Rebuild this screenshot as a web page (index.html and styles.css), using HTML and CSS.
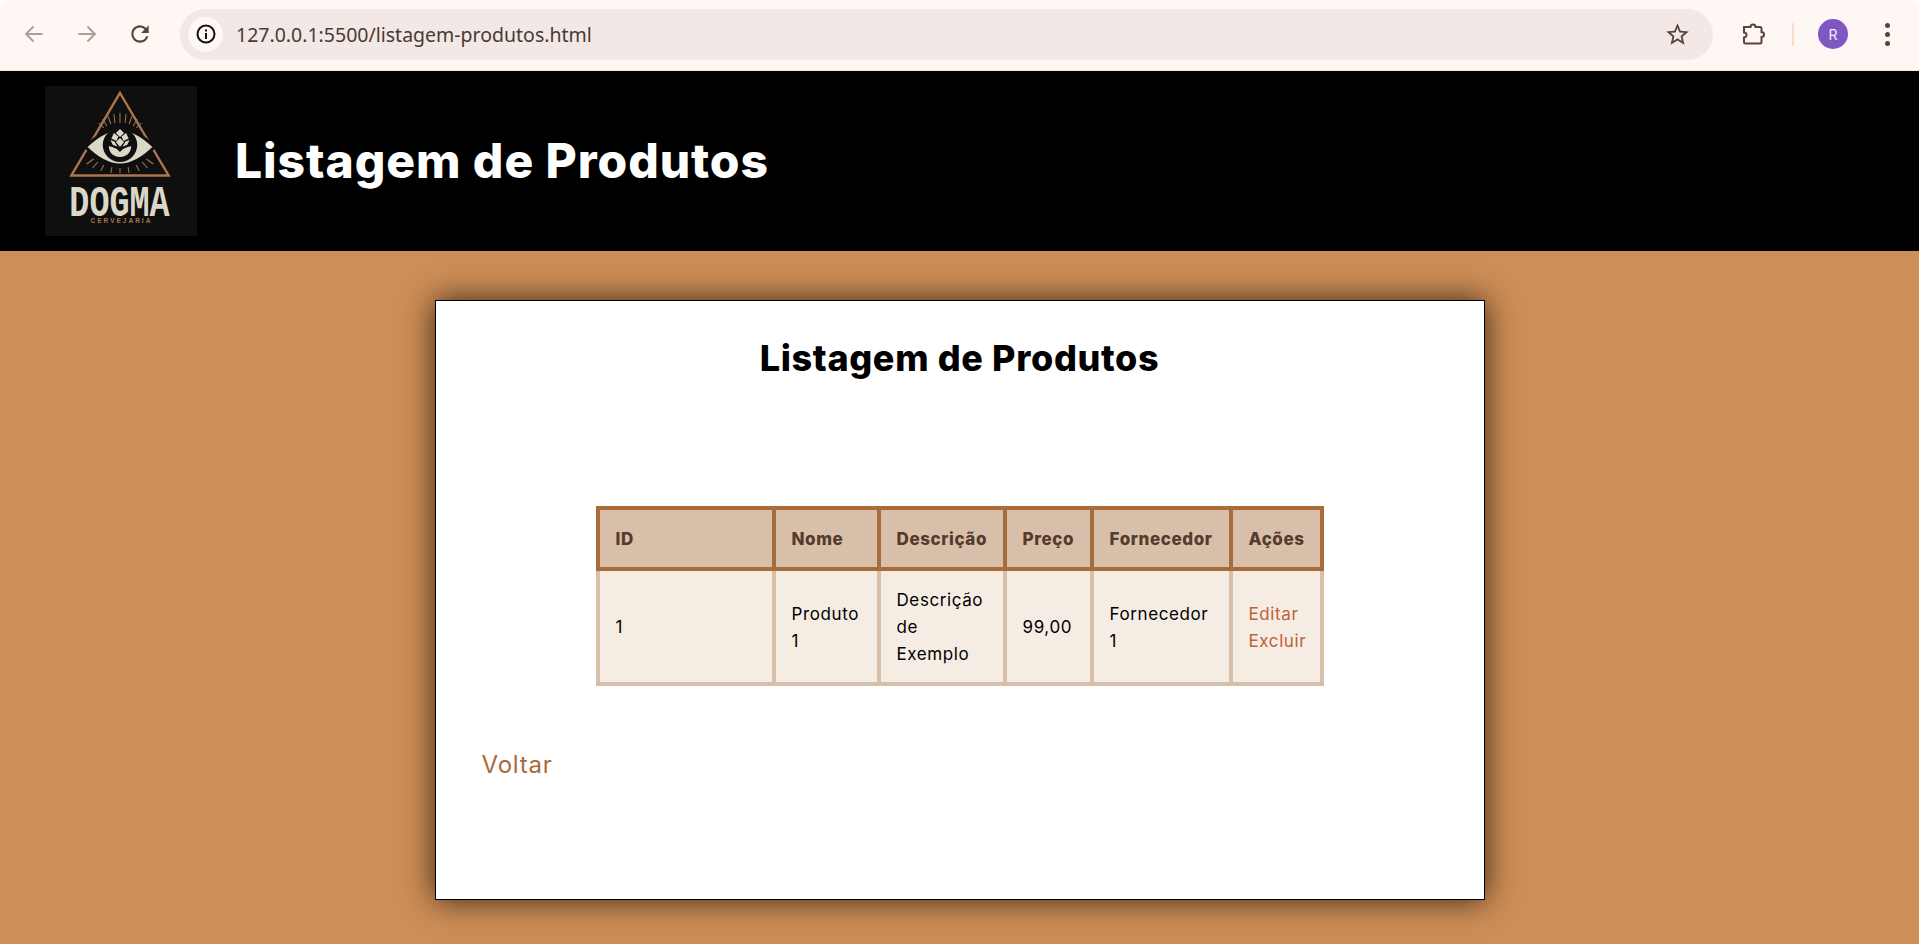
FILE: index.html
```html
<!DOCTYPE html>
<html lang="pt-BR">
<head>
  <meta charset="UTF-8" />
  <meta name="viewport" content="width=device-width, initial-scale=1.0"/>
  <title>Listagem de Produtos</title>
  <link rel="stylesheet" href="styles.css">
</head>
<body>
  <!-- browser bar -->
  <div class="toolbar">
    <div class="nav-btn">
      <svg class="icon-arrow" width="20" height="20" viewBox="0 0 20 20"><path d="M18.5 10H2M9.5 2.5L2 10l7.5 7.5"/></svg>
    </div>
    <div class="nav-btn">
      <svg class="icon-arrow" width="20" height="20" viewBox="0 0 20 20"><path d="M1.5 10H18M10.500 2.500L18 10l-7.500 7.500"/></svg>
    </div>
    <div class="nav-btn">
      <svg class="icon-solid" width="26" height="26" viewBox="0 0 24 24"><path d="M17.650 6.350A7.958 7.958 0 0 0 12 4c-4.420 0-7.990 3.580-7.990 8s3.570 8 7.990 8c3.730 0 6.840-2.550 7.730-6h-2.080A5.990 5.990 0 0 1 12 18c-3.310 0-6-2.690-6-6s2.690-6 6-6c1.660 0 3.140.690 4.220 1.780L13 11h7V4l-2.350 2.350z"/></svg>
    </div>
    <div class="omnibox">
      <span class="site-info">
        <svg width="22" height="22" viewBox="0 0 22 22"><circle cx="11" cy="11" r="8.500" fill="none" stroke="#111" stroke-width="2"/><rect x="10" y="10" width="2" height="6" fill="#111"/><rect x="10" y="6.500" width="2" height="2" fill="#111"/></svg>
      </span>
      <span class="url">127.0.0.1:5500/listagem-produtos.html</span>
      <svg class="icon-solid star" width="27" height="27" viewBox="0 0 24 24"><path d="M22 9.240l-7.190-.620L12 2 9.190 8.630 2 9.240l5.460 4.730L5.820 21 12 17.270 18.180 21l-1.630-7.030L22 9.240zM12 15.400l-3.760 2.270 1-4.280-3.320-2.880 4.380-.380L12 6.100l1.710 4.040 4.380.380-3.320 2.880 1 4.280L12 15.400z"/></svg>
    </div>
    <svg class="puzzle" width="24" height="24" viewBox="0 0 24 24"><path d="M3 5H9.500a2.500 2.500 0 0 1 5 0H19a1.500 1.500 0 0 1 1.500 1.500V10a2.500 2.500 0 0 1 0 5v5a1.500 1.500 0 0 1-1.500 1.500H4.500A1.500 1.500 0 0 1 3 20v-4.500a2.500 2.500 0 0 0 0-5z"/></svg>
    <span class="separator"></span>
    <span class="avatar">R</span>
    <span class="menu-dots"><i></i><i></i><i></i></span>
  </div>

  <header class="site-header">
    <svg class="logo" width="152" height="150" viewBox="0 0 150 150" preserveAspectRatio="none">
      <rect width="150" height="150" fill="#0f0f0f"/>
      <path d="M74 7L122 89.500H26z" fill="none" stroke="#a8774f" stroke-width="2.400"/>
      <!-- rays -->
      <g stroke="#a8774f" stroke-width="1">
        <path d="M74 27v10M68 28l1 9M80 28l-1 9M62 30l3 8M86 30l-3 8M57 33l4 7M91 33l-4 7M53 37l5 5M95 37l-5 5"/>
        <path d="M74 82v5M66 81l-1 6M82 81l1 6M58 79l-3 6M90 79l3 6M52 76l-5 6M96 76l5 6M48 73l-7 5M100 73l7 5"/>
      </g>
      <path d="M40 61C52 49 62 43 74 43S96 49 108 61C96 73 86 79 74 79S52 73 40 61z" fill="#dcd8c8" stroke="#0f0f0f" stroke-width="3"/>
      <circle cx="74" cy="59" r="17" fill="#0f0f0f"/>
      <g fill="#dcd8c8">
        <path d="M74 43l4 4-4 4-4-4z"/>
        <path d="M68 47l4.500 3.500-2 4.500-5-2.500zM80 47l-4.500 3.500 2 4.500 5-2.500z"/>
        <path d="M74 52l4 4-4 5-4-5z"/>
        <path d="M64.500 54l4 1.500 3 5-4.500-1.500zM83.500 54l-4 1.500-3 5 4.500-1.500z"/>
        <path d="M63 60c3 1 8 2 11 6 3-4 8-5 11-6 0 7-5 11-11 11s-11-4-11-11z"/>
      </g>
      <text class="logo-name" x="24" y="130" textLength="99" lengthAdjust="spacingAndGlyphs">DOGMA</text>
      <text class="logo-sub" x="45" y="137" textLength="59" lengthAdjust="spacing">CERVEJARIA</text>
    </svg>
    <h1>Listagem de Produtos</h1>
  </header>

  <main class="content">
    <section class="card">
      <h2>Listagem de Produtos</h2>
      <table class="products">
        <thead>
          <tr>
            <th class="col-id">ID</th>
            <th class="col-name">Nome</th>
            <th class="col-desc">Descrição</th>
            <th class="col-price">Preço</th>
            <th class="col-supplier">Fornecedor</th>
            <th class="col-actions">Ações</th>
          </tr>
        </thead>
        <tbody>
          <tr>
            <td>1</td>
            <td>Produto 1</td>
            <td>Descrição de Exemplo</td>
            <td>99,00</td>
            <td>Fornecedor 1</td>
            <td>
              <a href="#">Editar</a>
              <a href="#">Excluir</a>
            </td>
          </tr>
        </tbody>
      </table>
      <a class="back-link" href="#">Voltar</a>
    </section>
  </main>
</body>
</html>
```

FILE: styles.css
```css
* { box-sizing: border-box; }
html, body { height: 100%; }
body {
  margin: 0;
  display: flex;
  flex-direction: column;
  overflow: hidden;
  background: #fff;
  font-family: "Inter", "Noto Sans", sans-serif;
  font-size: 17px;
  line-height: 27px;
  color: #000;
}

/* browser bar */
.toolbar {
  height: 71px;
  flex: none;
  display: flex;
  align-items: center;
  padding: 0 0 2px 7px;
  background: #fff7f3;
  border-bottom: 1px solid #fbe3d6;
  border-radius: 10px 10px 0 0;
}
.nav-btn {
  width: 53px;
  height: 40px;
  display: flex;
  align-items: center;
  justify-content: center;
}
.icon-arrow { fill: none; stroke: #ab9d97; stroke-width: 1.8; }
.icon-solid { fill: #5a4337; }
.omnibox {
  width: 1533px;
  height: 51px;
  margin-left: 14px;
  padding: 0 22px 0 8px;
  display: flex;
  align-items: center;
  background: #f2e8e5;
  border-radius: 26px;
}
.site-info {
  width: 35px;
  height: 35px;
  display: flex;
  align-items: center;
  justify-content: center;
  background: #fff7f3;
  border-radius: 50%;
}
.url {
  margin-left: 13px;
  padding-top: 1px;
  flex: 1;
  font-family: "Noto Sans", sans-serif;
  font-size: 19.5px;
  color: #4a3a33;
}
.puzzle { margin-left: 28px; fill: none; stroke: #5a4337; stroke-width: 2; }
.separator {
  width: 2px;
  height: 23px;
  margin-left: 27px;
  background: #fbdcc8;
}
.avatar {
  width: 30px;
  height: 30px;
  margin-left: 24px;
  display: flex;
  align-items: center;
  justify-content: center;
  border-radius: 50%;
  background: #7e57c2;
  color: #f3edfa;
  font-size: 14px;
}
.menu-dots {
  margin-left: 37px;
  display: flex;
  flex-direction: column;
  gap: 4px;
}
.menu-dots i {
  width: 5px;
  height: 5px;
  border-radius: 50%;
  background: #5a4337;
}

/* site header */
.site-header {
  height: 180px;
  flex: none;
  display: flex;
  align-items: center;
  gap: 38px;
  padding-left: 45px;
  background: #000;
}
.site-header h1 {
  margin: 0 0 1px;
  font-size: 48px;
  font-weight: 800;
  letter-spacing: 0.92px;
  line-height: 60px;
  color: #fff;
}
.logo { flex: none; overflow: visible; }
.logo-name {
  font-family: "Liberation Mono", monospace;
  font-weight: 700;
  font-size: 44px;
  fill: #dcd8c8;
}
.logo-sub {
  font-family: "Liberation Sans", sans-serif;
  font-weight: 700;
  font-size: 6.5px;
  fill: #a8774f;
}

/* page */
.content {
  flex: 1;
  padding-top: 49px;
  background: #ce8e56;
}
.card {
  width: 1050px;
  height: 600px;
  margin: 0 auto;
  padding: 35px 46px 0;
  background: #fff;
  border: 1px solid #000;
  box-shadow: 0 0 30px rgba(0, 0, 0, 0.75);
}
.card h2 {
  margin: 0 0 126px;
  text-align: center;
  font-size: 36px;
  font-weight: 800;
  letter-spacing: 0.65px;
  line-height: 44px;
}

/* table */
.products {
  width: 728px;
  margin: 0 auto;
  table-layout: fixed;
  border-collapse: collapse;
}
.products th,
.products td {
  padding: 16px 16px 14px;
  text-align: left;
  letter-spacing: 0.6px;
}
.products th {
  background: #d8bfa9;
  border: 4px solid #a86b3a;
  color: #553b2d;
  font-weight: 800;
}
.products td {
  background: #f5ede4;
  border: 4px solid #d8bfa9;
}
.products a {
  display: block;
  color: #c0603a;
  text-decoration: none;
}
.col-id { width: 176px; }
.col-name { width: 105px; }
.col-desc { width: 126px; }
.col-price { width: 87px; }
.col-supplier { width: 139px; }
.col-actions { width: 91px; }

.back-link {
  display: block;
  margin-top: 61px;
  font-size: 24px;
  letter-spacing: 0.8px;
  line-height: 36px;
  color: #a8693a;
  text-decoration: none;
}
```
